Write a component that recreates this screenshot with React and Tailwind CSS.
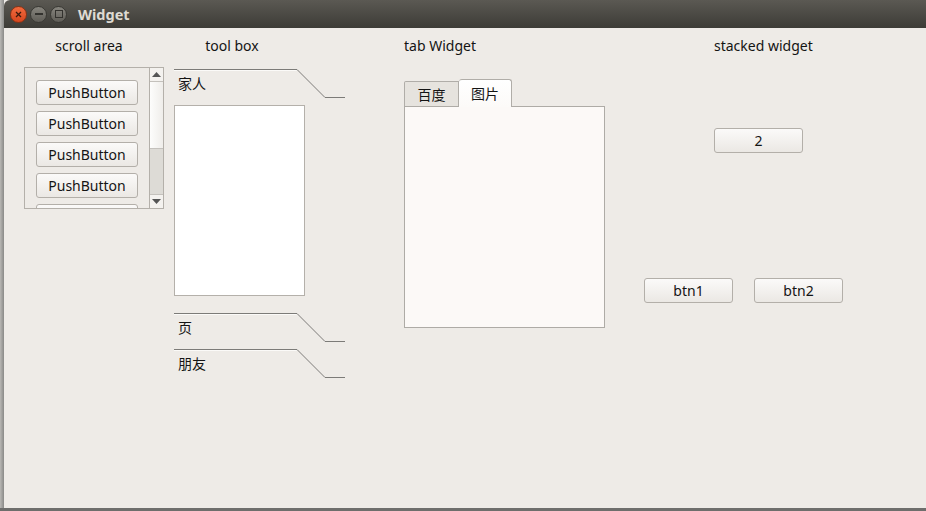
import React from 'react';

const font = { fontFamily: '"Noto Sans", "Noto Sans CJK SC", sans-serif' };

const Btn = ({ children, className = '' }) => (
  <div className={`shrink-0 h-[25px] rounded-[3px] border border-[#b3afa9] bg-gradient-to-b from-[#fbfaf9] to-[#ebe8e4] flex items-center justify-center text-[14px] text-[#141414] ${className}`}>
    {children}
  </div>
);

const ToolHeader = ({ label }) => (
  <div className="relative h-[36px] w-[171px]">
    <svg className="absolute left-0 top-0" width="171" height="30" viewBox="0 0 171 30">
      <path d="M0 0.5 H123 L151 28.5 H171" fill="none" stroke="#7c7b78" strokeWidth="1" />
      <path d="M0 1.5 H122.5" fill="none" stroke="#fbfaf8" strokeWidth="1" />
    </svg>
    <div className="pl-[4px] pt-[5px] text-[14px] leading-[20px] text-[#141414]">{label}</div>
  </div>
);

export default function App() {
  return (
    <div className="w-[926px] h-[511px] bg-[#8d8d8b] flex flex-col overflow-hidden" style={font}>
      <div className="flex flex-1">
        {/* desktop strip */}
        <div className="w-[4px] bg-gradient-to-r from-[#b9b8b5] to-[#8a8a88]" />
        <div className="flex-1 flex flex-col bg-[#eeebe7]">
          {/* title bar */}
          <div className="h-[28px] rounded-tl-[6px] bg-gradient-to-b from-[#5b5953] to-[#3d3c37] flex items-center pl-[6px]">
            <div className="shrink-0 w-[17px] h-[17px] rounded-full bg-gradient-to-b from-[#f26a3d] to-[#d5461e] border border-[#8a3214] flex items-center justify-center">
              <svg width="7" height="7" viewBox="0 0 7 7"><path d="M1 1 L6 6 M6 1 L1 6" stroke="#3b1a0d" strokeWidth="1.3" /></svg>
            </div>
            <div className="shrink-0 ml-[3px] w-[17px] h-[17px] rounded-full bg-gradient-to-b from-[#87857e] to-[#5f5d57] border border-[#3a3934] flex items-center justify-center">
              <div className="w-[8px] h-[2px] bg-[#33322e]" />
            </div>
            <div className="shrink-0 ml-[3px] w-[17px] h-[17px] rounded-full bg-gradient-to-b from-[#87857e] to-[#5f5d57] border border-[#3a3934] flex items-center justify-center">
              <div className="w-[8px] h-[8px] border-[1.5px] border-[#33322e]" />
            </div>
            <div className="ml-[11px] text-[14.5px] font-bold text-[#dfdbd2] leading-none">Widget</div>
          </div>

          {/* content */}
          <div className="flex-1 flex pl-[20px] pt-[10px]">
            {/* scroll area */}
            <div className="flex flex-col w-[140px]">
              <div className="w-[130px] text-center text-[14px] leading-[16px] text-[#141414]">scroll area</div>
              <div className="mt-[13px] h-[142px] border border-[#b4b0aa] flex overflow-hidden">
                <div className="flex-1 flex flex-col gap-[6px] pl-[11px] pr-[11px] pt-[12px] overflow-hidden">
                  <Btn>PushButton</Btn>
                  <Btn>PushButton</Btn>
                  <Btn>PushButton</Btn>
                  <Btn>PushButton</Btn>
                  <Btn>PushButton</Btn>
                </div>
                <div className="w-[14px] border-l border-[#b4b0aa] flex flex-col">
                  <div className="h-[14px] bg-[#f4f2ef] flex items-center justify-center border-b border-[#c4c1bc]">
                    <svg width="9" height="5" viewBox="0 0 9 5"><path d="M0 5 L4.5 0 L9 5Z" fill="#555" /></svg>
                  </div>
                  <div className="h-[67px] bg-gradient-to-r from-[#fdfdfc] to-[#efedea] border-b border-[#c4c1bc]" />
                  <div className="flex-1 bg-[#dddbd6]" />
                  <div className="h-[14px] bg-[#f4f2ef] flex items-center justify-center border-t border-[#c4c1bc]">
                    <svg width="9" height="5" viewBox="0 0 9 5"><path d="M0 0 L4.5 5 L9 0Z" fill="#555" /></svg>
                  </div>
                </div>
              </div>
            </div>

            {/* tool box */}
            <div className="ml-[10px] flex flex-col w-[171px]">
              <div className="w-[116px] text-center text-[14px] leading-[16px] text-[#141414]">tool box</div>
              <div className="mt-[15px]">
                <ToolHeader label="家人" />
                <div className="w-[131px] h-[191px] bg-white border border-[#b4b0aa]" />
                <div className="h-[17px]" />
                <ToolHeader label="页" />
                <ToolHeader label="朋友" />
              </div>
            </div>

            {/* tab widget */}
            <div className="ml-[59px] flex flex-col w-[201px]">
              <div className="text-[14px] leading-[16px] text-[#141414]">tab Widget</div>
              <div className="mt-[24px] flex items-end h-[28px]">
                <div className="w-[55px] h-[25px] bg-[#e6e3de] border border-b-0 border-[#b0ada8] rounded-tl-[2px] flex items-center justify-center text-[14px] text-[#141414]">百度</div>
                <div className="w-[53px] h-[28px] bg-gradient-to-b from-[#ffffff] to-[#fcfaf8] border border-l-0 border-b-0 border-[#b0ada8] rounded-t-[3px] flex items-center justify-center text-[14px] text-[#141414] -mb-[1px] relative">图片</div>
              </div>
              <div className="h-[222px] bg-[#fcf9f7] border border-[#aeaba6]" />
            </div>

            {/* stacked widget */}
            <div className="ml-[39px] flex flex-col w-[200px]">
              <div className="pl-[70px] text-[14px] leading-[16px] text-[#141414]">stacked widget</div>
              <div className="mt-[74px] pl-[70px]">
                <Btn className="w-[89px]">2</Btn>
              </div>
              <div className="mt-[125px] flex gap-[21px]">
                <Btn className="w-[89px]">btn1</Btn>
                <Btn className="w-[89px]">btn2</Btn>
              </div>
            </div>
          </div>
        </div>
      </div>
      <div className="h-[3px] bg-[#6e6e6c]" />
    </div>
  );
}
